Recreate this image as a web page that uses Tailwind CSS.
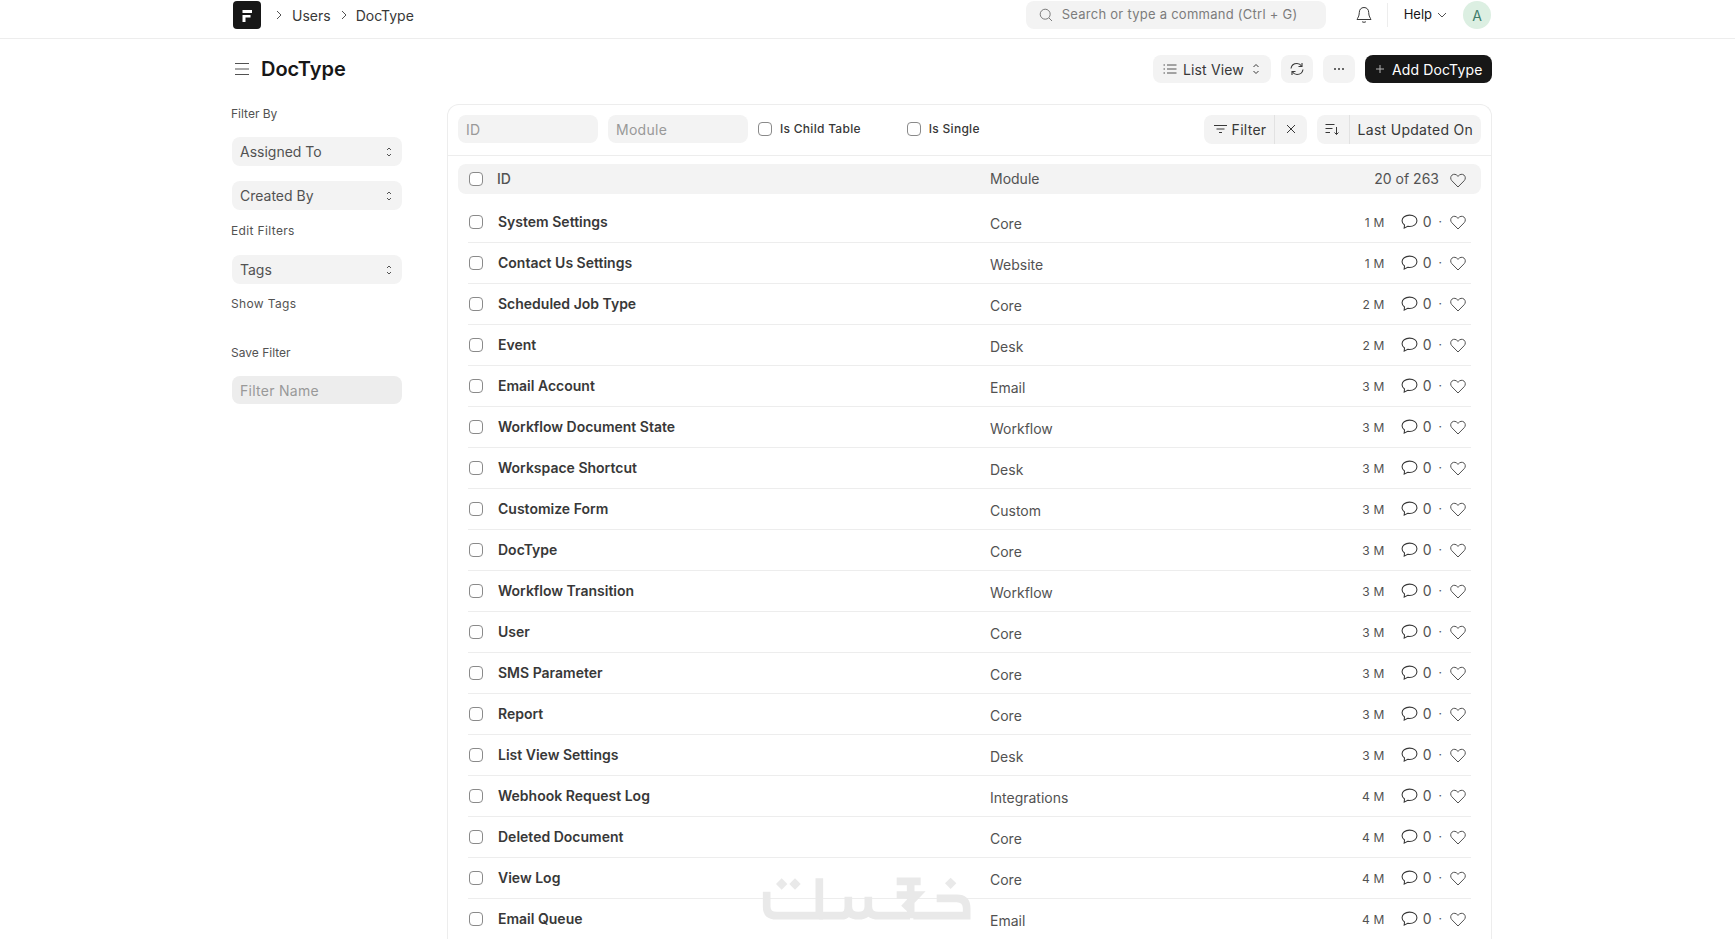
<!DOCTYPE html>
<html lang="en">
<head>
    <meta charset="UTF-8">
    <title>DocType</title>
    <script src="https://cdn.jsdelivr.net/npm/@tailwindcss/browser@4"></script>
</head>
<body class="h-screen overflow-hidden bg-white font-[Inter,sans-serif] text-[#383838] relative">
    <!-- navbar -->
    <header class="h-[39px] border-b border-[#ededed]">
        <div class="ml-[231px] w-[1261px] h-[38px] flex items-center">
            <svg width="28" height="28" viewBox="0 0 28 28" class="ml-[2px] mb-[8px]">
                <rect width="28" height="28" rx="4" fill="#171717"/>
                <path d="M9.500 9h9.500v3H9.500zM9.500 14h8v2.500H12.500V21h-3z" fill="#fff"/>
            </svg>
            <nav class="flex items-center text-[14px] text-[#383838] ml-[14px] mb-[8px]">
                <svg width="8" height="10" viewBox="0 0 8 10" fill="none" stroke="#525252"><path d="M2 1l4 4-4 4"/></svg>
                <span class="ml-[9px]">Users</span>
                <svg width="8" height="10" viewBox="0 0 8 10" fill="none" stroke="#525252" class="ml-[9px]"><path d="M2 1l4 4-4 4"/></svg>
                <span class="ml-[8px]">DocType</span>
            </nav>
            <div class="ml-auto flex items-center mb-[8px]">
                <div class="w-[300px] h-[28px] rounded-lg bg-[#f3f3f3] flex items-center pl-[13px] text-[13px] text-[#7c7c7c] tracking-[0.02em]">
                    <svg width="14" height="14" viewBox="0 0 14 14" fill="none" stroke="#7c7c7c"><circle cx="6.200" cy="6.200" r="5"/><path d="M10 10l3 3"/></svg>
                    <span class="ml-[9px]">Search or type a command (Ctrl + G)</span>
                </div>
                <svg width="16" height="18" viewBox="0 0 16 18" fill="none" stroke="#383838" class="ml-[30px]"><path d="M8 1.500c-3 0-4.700 2.200-4.700 5 0 4-1.800 5.500-2.300 7h14c-.5-1.500-2.300-3-2.300-7 0-2.800-1.700-5-4.700-5z"/><path d="M6 15.500c.5 1 3.500 1 4 0"/></svg>
                <div class="w-px h-[24px] bg-[#ededed] ml-[15px]"></div>
                <span class="ml-[16px] text-[13px] text-[#171717]">Help</span>
                <svg width="10" height="8" viewBox="0 0 10 8" fill="none" stroke="#525252" class="ml-[5px]"><path d="M1 2l4 4 4-4"/></svg>
                <div class="w-[28px] h-[28px] rounded-full bg-[#dcefe2] text-[#3f7d6c] flex items-center justify-center text-[14px] ml-[16px] mr-[1px]">A</div>
            </div>
        </div>
    </header>

    <div class="ml-[231px] w-[1261px]">
        <!-- page head -->
        <div class="h-[60px] mb-[5px] flex items-center">
            <svg width="16" height="14" viewBox="0 0 16 14" fill="none" stroke="#525252" class="ml-[3px]"><path d="M1 1.500h14M1 7h14M1 12.500h14"/></svg>
            <h1 class="ml-[11px] text-[20px] font-semibold text-[#171717]">DocType</h1>
            <div class="ml-auto flex items-center gap-[10px] text-[14px]">
                <button class="w-[118px] h-[28px] rounded-lg bg-[#f3f3f3] flex items-center pl-[10px] text-[#383838] tracking-[0.01em]">
                    <svg width="14" height="12" viewBox="0 0 14 12" fill="none" stroke="#525252"><path d="M4 2h9.500M4 6h9.500M4 10h9.500M.5 2h1.500M.5 6h1.500M.5 10h1.500"/></svg>
                    <span class="ml-[6px]">List View</span>
                    <svg width="8" height="12" viewBox="0 0 8 12" fill="none" stroke="#383838" class="ml-[8px]"><path d="M1.500 4L4 1.500 6.500 4M1.500 8L4 10.500 6.500 8"/></svg>
                </button>
                <button class="w-[32px] h-[28px] rounded-lg bg-[#f3f3f3] flex items-center justify-center">
                    <svg width="16" height="14" viewBox="0 0 16 14" fill="none" stroke="#383838" stroke-width="1.100"><path d="M2 6.500C2.500 3.500 5 1.500 8 1.500c2 0 3.500 1 4.500 2.500M14 7.500c-.5 3-3 5-6 5-2 0-3.500-1-4.500-2.500"/><path d="M13 1v3.500H9.500M3 13V9.500h3.500"/></svg>
                </button>
                <button class="w-[32px] h-[28px] rounded-lg bg-[#f3f3f3] flex items-center justify-center">
                    <svg width="12" height="4" viewBox="0 0 12 4" fill="#383838"><circle cx="2" cy="2" r="1"/><circle cx="6" cy="2" r="1"/><circle cx="10" cy="2" r="1"/></svg>
                </button>
                <button class="w-[127px] h-[28px] rounded-lg bg-[#171717] flex items-center pl-[10px] text-white tracking-[0.01em]">
                    <svg width="10" height="10" viewBox="0 0 10 10" fill="none" stroke="#b5b5b5"><path d="M5 1v8M1 5h8"/></svg>
                    <span class="ml-[7px]">Add DocType</span>
                </button>
            </div>
        </div>

        <div class="flex">
            <!-- sidebar -->
            <aside class="w-[216px] shrink-0 text-[12px] text-[#525252]">
                <div class="w-[171px] pt-[2px] pl-[1px]">
                    <p class="h-[16px] leading-[16px] -ml-[1px]">Filter By</p>
                    <div class="mt-[15px] h-[29px] rounded-lg bg-[#f3f3f3] flex items-center justify-between pl-[8px] pr-[9px] text-[14px]">Assigned To
                        <svg width="8" height="12" viewBox="0 0 8 12" fill="none" stroke="#525252"><path d="M2 4l2-2 2 2M2 8l2 2 2-2"/></svg></div>
                    <div class="mt-[15px] h-[29px] rounded-lg bg-[#f3f3f3] flex items-center justify-between pl-[8px] pr-[9px] text-[14px]">Created By
                        <svg width="8" height="12" viewBox="0 0 8 12" fill="none" stroke="#525252"><path d="M2 4l2-2 2 2M2 8l2 2 2-2"/></svg></div>
                    <p class="mt-[13px] h-[16px] leading-[16px] tracking-[0.03em] -ml-[1px]">Edit Filters</p>
                    <div class="mt-[16px] h-[29px] rounded-lg bg-[#f3f3f3] flex items-center justify-between pl-[8px] pr-[9px] text-[14px]">Tags
                        <svg width="8" height="12" viewBox="0 0 8 12" fill="none" stroke="#525252"><path d="M2 4l2-2 2 2M2 8l2 2 2-2"/></svg></div>
                    <p class="mt-[12px] h-[16px] leading-[16px] tracking-[0.03em] -ml-[1px]">Show Tags</p>
                    <p class="mt-[33px] h-[16px] leading-[16px] -ml-[1px]">Save Filter</p>
                    <div class="mt-[15px] h-[28px] rounded-lg bg-[#ededed] flex items-center px-[8px] text-[14px] text-[#999] tracking-[0.02em]">Filter Name</div>
                </div>
            </aside>

            <!-- list card -->
            <main class="flex-1 border border-[#ededed] border-b-0 rounded-t-xl h-[900px]">
                <div class="h-[51px] pb-[2px] border-b border-[#ededed] flex items-center px-[10px] text-[14px] tracking-[0.02em]">
                    <div class="w-[140px] h-[28px] rounded-lg bg-[#f3f3f3] flex items-center px-[8px] text-[#999]">ID</div>
                    <div class="w-[140px] h-[28px] rounded-lg bg-[#f3f3f3] flex items-center px-[8px] text-[#999] ml-[10px]">Module</div>
                    <span class="w-[14px] h-[14px] rounded-[4px] border border-[#8a8a8a] ml-[10px]"></span>
                    <span class="ml-[8px] text-[12px] font-medium text-[#383838]">Is Child Table</span>
                    <span class="w-[14px] h-[14px] rounded-[4px] border border-[#8a8a8a] ml-[46px]"></span>
                    <span class="ml-[8px] text-[12px] font-medium text-[#383838]">Is Single</span>

                    <div class="ml-auto flex items-center h-[29px] rounded-lg bg-[#f3f3f3] overflow-hidden">
                        <div class="w-[71px] h-full flex items-center pl-[10px] border-r border-[#e2e2e2]">
                            <svg width="13" height="10" viewBox="0 0 13 10" fill="none" stroke="#383838"><path d="M0 1.500h13M2.500 5h8M5 8.500h3"/></svg>
                            <span class="ml-[5px]">Filter</span>
                        </div>
                        <div class="w-[32px] h-full flex items-center justify-center">
                            <svg width="10" height="10" viewBox="0 0 10 10" fill="none" stroke="#383838"><path d="M1 1l8 8M9 1l-8 8"/></svg>
                        </div>
                    </div>
                    <div class="ml-[10px] flex items-center h-[29px] rounded-lg bg-[#f3f3f3] overflow-hidden">
                        <div class="w-[33px] h-full flex items-center justify-center border-r border-[#e2e2e2]">
                            <svg width="15" height="12" viewBox="0 0 15 12" fill="none" stroke="#383838"><path d="M.5 1.500h9M.5 5.500h7M.5 9.500h4.500M11.500 4v7.500M9.500 9.500l2 2 2-2"/></svg>
                        </div>
                        <span class="px-[8px]">Last Updated On</span>
                    </div>
                </div>

                <div class="px-[10px] pt-[8px]">
                    <div class="h-[30px] rounded-lg bg-[#f3f3f3] flex items-center text-[14px] text-[#525252]">
                        <span class="w-[14px] h-[14px] rounded-[4px] border border-[#8a8a8a] bg-white ml-[11px]"></span>
                        <span class="ml-[14px] font-medium w-[493px] -mt-[1px]">ID</span>
                        <span class="-mt-[1px]">Module</span>
                        <span class="ml-auto -mt-[1px]">20 of 263</span>
                        <svg width="16" height="15" viewBox="0 0 16 15" fill="none" stroke="#525252" class="ml-[11px] mr-[15px] mt-[2px]"><path d="M8 14L1.800 7.700C.2 6 .4 3.500 2 2.100 3.700.7 6.200 1 8 3.400 9.800 1 12.300.7 14 2.100c1.600 1.400 1.800 3.900.2 5.600L8 14z"/></svg>
                    </div>
                    <div id="rows" class="pt-[8px]"></div>
                </div>
            </main>
        </div>
    </div>

    <!-- watermark -->
    <svg width="320" height="99" viewBox="0 0 960 297" fill="none" stroke="#e9e9e9" stroke-width="23" class="absolute left-[700px] top-[840px] pointer-events-none">
        <path d="M200 155V200Q200 227 230 227H358V115"/>
        <path d="M358 227H425Q445 227 445 200V170M445 200Q445 227 475 227Q505 227 505 200V170M505 200Q505 227 535 227H630"/>
        <path d="M590 124H662M590 165H650L612 205M632 124V235"/>
        <path d="M710 175H770Q800 175 800 205V227H640"/>
        <path d="M245 115l17 17-17 17-17-17zM285 115l17 17-17 17-17-17zM752 113l17 17-17 17-17-17z" fill="#e9e9e9" stroke="none"/>
    </svg>

    <script>
        const items = [
            ['System Settings', 'Core', '1 M'], ['Contact Us Settings', 'Website', '1 M'],
            ['Scheduled Job Type', 'Core', '2 M'], ['Event', 'Desk', '2 M'],
            ['Email Account', 'Email', '3 M'], ['Workflow Document State', 'Workflow', '3 M'],
            ['Workspace Shortcut', 'Desk', '3 M'], ['Customize Form', 'Custom', '3 M'],
            ['DocType', 'Core', '3 M'], ['Workflow Transition', 'Workflow', '3 M'],
            ['User', 'Core', '3 M'], ['SMS Parameter', 'Core', '3 M'],
            ['Report', 'Core', '3 M'], ['List View Settings', 'Desk', '3 M'],
            ['Webhook Request Log', 'Integrations', '4 M'], ['Deleted Document', 'Core', '4 M'],
            ['View Log', 'Core', '4 M'], ['Email Queue', 'Email', '4 M'],
        ];
        document.getElementById('rows').innerHTML = items.map(([name, mod, time]) => `
            <div class="h-[41px] mx-[10px] border-b border-[#ededed] flex items-center text-[14px]">
                <span class="w-[14px] h-[14px] rounded-[4px] border border-[#8a8a8a] ml-[1px]"></span>
                <span class="ml-[15px] font-semibold w-[492px] -mt-[1px]">${name}</span>
                <span class="text-[#525252] mt-[3px]">${mod}</span>
                <span class="ml-auto text-[12px] text-[#525252] tracking-[0.02em] mt-[1px]">${time}</span>
                <svg width="17" height="16" viewBox="0 0 16 15" fill="none" stroke="#383838" class="ml-[16px]"><path d="M8 1C4 1 1 3.300 1 6.300c0 1.700 1 3.100 2.300 4l-.3 3 3.300-1.800c.6.100 1.100.200 1.700.200 4 0 7-2.300 7-5.400S12 1 8 1z"/></svg>
                <span class="ml-[5px] text-[#525252] -mt-[1px]">0</span>
                <span class="ml-[7px] text-[#525252] text-[12px] -mt-[1px]">·</span>
                <svg width="16" height="15" viewBox="0 0 16 15" fill="none" stroke="#525252" class="ml-[8px] mr-[5px] mt-[1px]"><path d="M8 14L1.800 7.700C.2 6 .4 3.500 2 2.100 3.700.7 6.200 1 8 3.400 9.800 1 12.300.7 14 2.100c1.600 1.400 1.800 3.900.2 5.600L8 14z"/></svg>
            </div>`).join('');
    </script>
</body>
</html>
